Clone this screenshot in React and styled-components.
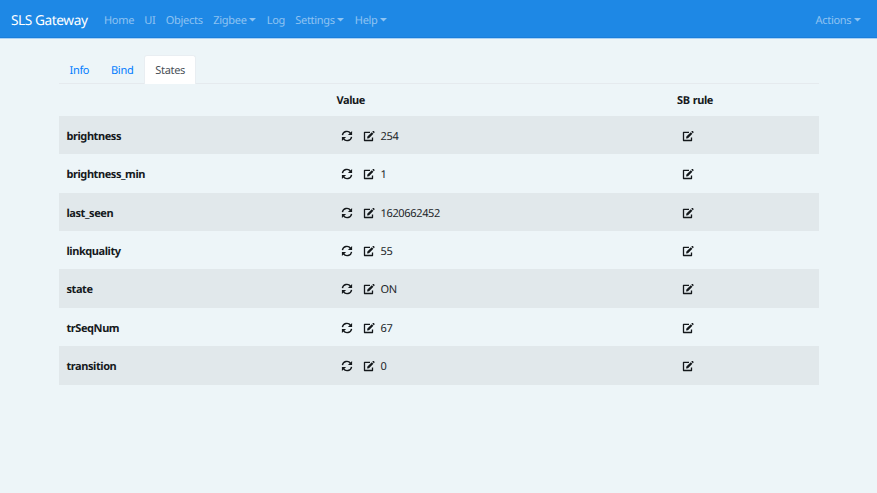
import React from "react";
import styled, { createGlobalStyle } from "styled-components";

const GlobalStyle = createGlobalStyle`
  * { box-sizing: border-box; }
  html, body { margin: 0; min-height: 100%; background: #edf5f8; }
  body {
    overflow: hidden;
    color: #212529;
    font: 11px/16px "Noto Sans", sans-serif;
    letter-spacing: -0.3px;
    text-rendering: geometricPrecision;
  }
`;

const Navbar = styled.nav`
  display: flex;
  align-items: center;
  height: 38px;
  padding: 4px 11px 0;
  background: #1e88e5;
  border-bottom: 1px solid #1a7edb;
  box-shadow: 0 1px 0 #a9d2f5;
`;

const Brand = styled.a`
  width: 87.5px;
  color: #fff;
  font-size: 13.7px;
  white-space: nowrap;
  letter-spacing: -0.43px;
`;

const NavList = styled.div`
  display: flex;
  flex: 1;
`;

const NavItem = styled.a`
  display: flex;
  align-items: center;
  margin-left: ${(p) => (p.$end ? "auto" : "0")};
  width: ${(p) => p.$width}px;
  padding-left: 5.5px;
  color: rgba(255, 255, 255, 0.5);
  white-space: nowrap;
`;

const Caret = styled.svg`
  flex: none;
  width: 7px;
  height: 4px;
  margin: -2px 0 0 2.7px;
  fill: currentColor;
`;

const Content = styled.main`
  width: 760.5px;
  margin: 17px 0 0 58.5px;
`;

const Tabs = styled.div`
  display: flex;
  height: 28.6px;
  border-bottom: 1px solid #e5eaee;
`;

const Tab = styled.a`
  width: ${(p) => p.$width}px;
  height: 28.6px;
  padding-top: 6.6px;
  text-align: center;
  color: ${(p) => (p.$active ? "#495057" : "#007bff")};
  background: ${(p) => (p.$active ? "#fff" : "transparent")};
  border: 1px solid ${(p) => (p.$active ? "#e9eef2" : "transparent")};
  border-bottom: 0;
  border-radius: 3px 3px 0 0;
`;

const Row = styled.div`
  display: grid;
  grid-template-columns: 270px 340.5px 1fr;
  align-items: center;
  height: ${(p) => (p.$head ? 32.4 : 38.36)}px;
  padding-top: ${(p) => (p.$head ? 2.4 : 3.3)}px;
  background: ${(p) => (p.$striped ? "#e1e8eb" : "transparent")};
`;

const Cell = styled.div`
  display: flex;
  align-items: center;
  padding-left: 8px;
  font-weight: ${(p) => (p.$bold ? 700 : 400)};
  letter-spacing: ${(p) => (p.$bold ? -0.43 : -0.34)}px;
  word-spacing: 0.8px;
  color: ${(p) => (p.$bold ? "#15191c" : "#212529")};
`;

const Action = styled.span`
  display: flex;
  width: 22px;
  padding: 0 0 1.6px ${(p) => p.$inset || 4.3}px;
  color: #14181b;
`;

const Icon = styled.svg`
  display: block;
  flex: none;
  width: 12px;
  height: 12px;
  overflow: visible;
`;

const RefreshIcon = () => (
  <Icon viewBox="0 0 12 12" fill="none" stroke="currentColor" strokeWidth="1.35">
    <path d="M1.4 5.2A4.5 4.5 0 0 1 9.6 3.4M10.6 6.8A4.5 4.5 0 0 1 2.4 8.6" />
    <path d="M11.1 .9v4.2H6.9zM.9 11.1V6.9h4.2z" fill="currentColor" stroke="none" />
  </Icon>
);

const EditIcon = () => (
  <Icon viewBox="0 0 12 12">
    <path
      d="M7 2.3H1.5v8.2h8V7.4"
      fill="none"
      stroke="currentColor"
      strokeWidth="1.3"
      strokeLinejoin="round"
    />
    <path
      d="M4.4 6.6 8.8 2.2l1.6 1.6L6 8.2l-1.9.3zM9.3 1.7l.7-.6q.4-.3.8 0l.7.7q.4.4 0 .8l-.6.7z"
      fill="currentColor"
    />
  </Icon>
);

const DropdownCaret = () => (
  <Caret viewBox="0 0 7 4"><path d="M0 0h7L3.5 3.6z" /></Caret>
);

const links = [
  ["Home", 40.3], ["UI", 21.5], ["Objects", 47.5], ["Zigbee", 53.5, true],
  ["Log", 28.5], ["Settings", 59.5, true], ["Help", 44, true],
];

const states = [
  ["brightness", "254"], ["brightness_min", "1"], ["last_seen", "1620662452"],
  ["linkquality", "55"], ["state", "ON"], ["trSeqNum", "67"], ["transition", "0"],
];

export default function App() {
  return (
    <>
      <GlobalStyle />
      <Navbar>
        <Brand>SLS Gateway</Brand>
        <NavList>
          {links.map(([label, width, menu]) => (
            <NavItem key={label} $width={width}>{label}{menu && <DropdownCaret />}</NavItem>
          ))}
          <NavItem $end $width={56}>Actions<DropdownCaret /></NavItem>
        </NavList>
      </Navbar>
      <Content>
        <Tabs>
          <Tab $width={41.7}>Info</Tab>
          <Tab $width={44}>Bind</Tab>
          <Tab $active $width={52}>States</Tab>
        </Tabs>
        <Row $head>
          <Cell />
          <Cell $bold>Value</Cell>
          <Cell $bold>SB rule</Cell>
        </Row>
        {states.map(([name, value], i) => (
          <Row key={name} $striped={i % 2 === 0}>
            <Cell $bold>{name}</Cell>
            <Cell>
              <Action><RefreshIcon /></Action>
              <Action><EditIcon /></Action>
              <span>{value}</span>
            </Cell>
            <Cell><Action $inset={5}><EditIcon /></Action></Cell>
          </Row>
        ))}
      </Content>
    </>
  );
}
